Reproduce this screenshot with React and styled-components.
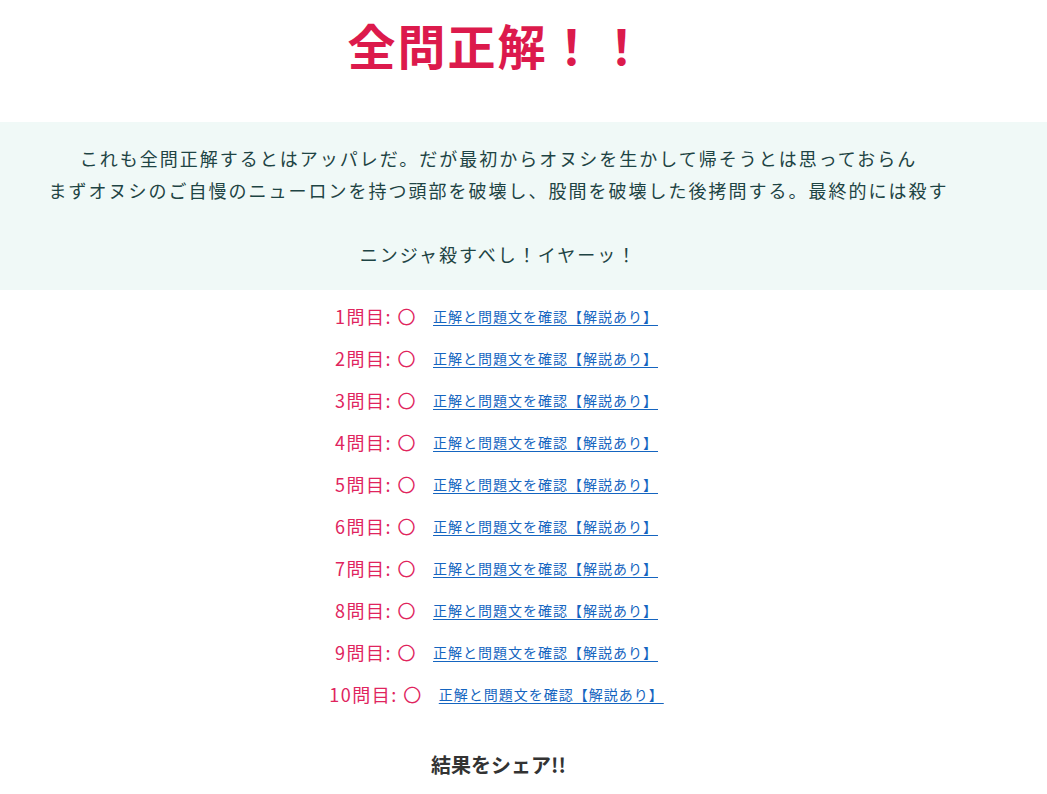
import styled, { createGlobalStyle } from 'styled-components';

const GlobalStyle = createGlobalStyle`
	html, body {
		margin: 0;
		padding: 0;
		background: #ffffff;
	}
	body {
		font-family: "Noto Sans CJK JP", "Noto Sans", sans-serif;
	}
`;

const results = Array.from({ length: 10 }, (_, i) => i + 1);

export default function App() {
	return (
		<Page>
			<GlobalStyle />
			<Title>全問正解！！</Title>
			<Band>
				<Message>
					<p>
						これも全問正解するとはアッパレだ。だが最初からオヌシを生かして帰そうとは思っておらん
						<br />
						まずオヌシのご自慢のニューロンを持つ頭部を破壊し、股間を破壊した後拷問する。最終的には殺す
					</p>
					<p>ニンジャ殺すべし！イヤーッ！</p>
				</Message>
			</Band>
			<List>
				{results.map((n) => (
					<Row key={n}>
						<Label>
							{n}問目: 〇
						</Label>
						<Link href="#">正解と問題文を確認【解説あり】</Link>
					</Row>
				))}
			</List>
			<Share>結果をシェア!!</Share>
		</Page>
	);
}

const Page = styled.div`
	width: 1047px;
	display: flex;
	flex-direction: column;
	align-items: stretch;
`;

const Title = styled.h1`
	margin: 0;
	padding: 12px 52px 0 0;
	height: 122px;
	box-sizing: border-box;
	text-align: center;
	font-size: 48px;
	font-weight: 700;
	letter-spacing: 2px;
	line-height: 64px;
	color: #dc1a4c;
`;

const Band = styled.div`
	background: #f0f9f7;
	padding: 20px 50px 20px 0;
`;

const Message = styled.div`
	text-align: center;
	font-size: 18px;
	letter-spacing: 2px;
	line-height: 32px;
	color: #1e4444;

	p {
		margin: 0;
	}
	p + p {
		margin-top: 32px;
	}
`;

const List = styled.div`
	display: flex;
	flex-direction: column;
	align-items: center;
	padding: 10px 54px 0 0;
	gap: 10px;
`;

const Row = styled.div`
	display: flex;
	align-items: center;
	gap: 16px;
	height: 32px;
`;

const Label = styled.span`
	font-size: 18px;
	letter-spacing: 1.5px;
	color: #e0245e;
	white-space: pre;
`;

const Link = styled.a`
	font-size: 14px;
	letter-spacing: 1px;
	color: #1565c0;
	text-decoration: underline;
	text-underline-offset: 3px;
`;

const Share = styled.div`
	margin-top: 40px;
	padding-right: 50px;
	text-align: center;
	font-size: 20px;
	font-weight: 700;
	color: #333333;
`;
